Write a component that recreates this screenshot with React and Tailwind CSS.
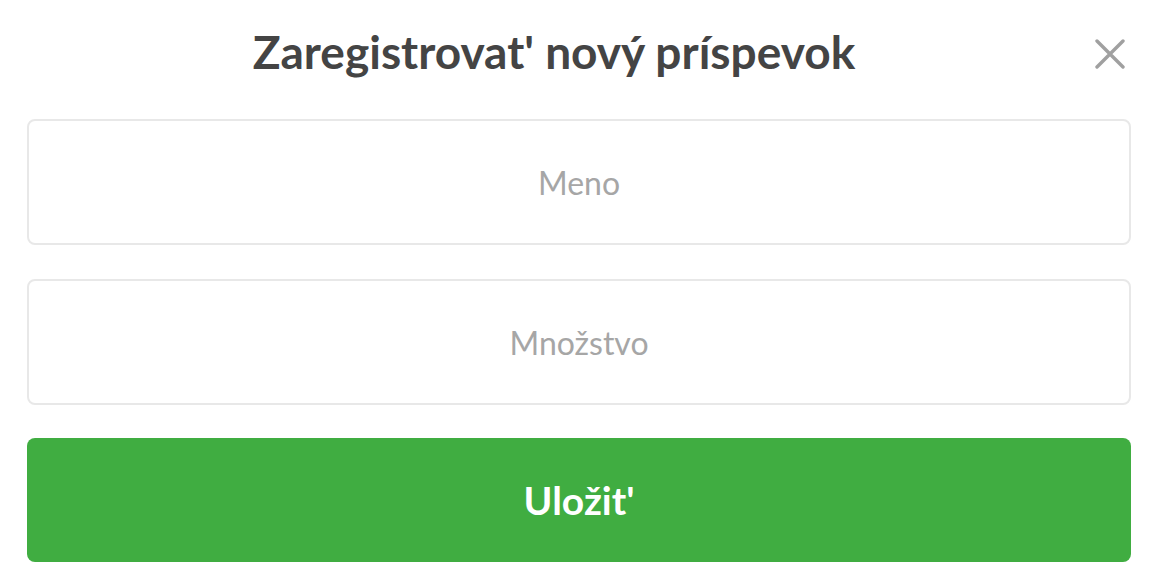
import React, { useState } from "react";

export default function App() {
  const [name, setName] = useState("");
  const [amount, setAmount] = useState("");

  return (
    <div
      className="w-[1160px] h-[580px] bg-white pl-[27px] pr-[29px] pt-[22px] flex flex-col"
      style={{ fontFamily: "Lato, 'Noto Sans', sans-serif" }}
    >
      <div className="flex items-center h-[60px]">
        <h1 className="flex-1 text-center text-[46px] font-bold text-[#444444] leading-none">
          Zaregistrovat' nový príspevok
        </h1>
        <button className="w-[50px] h-[50px] flex items-center justify-end pr-[6px] pt-[4px]" aria-label="close">
          <svg width="30" height="30" viewBox="0 0 30 30" fill="none">
            <path d="M2 2 L28 28 M28 2 L2 28" stroke="#a0a0a0" strokeWidth="3.4" strokeLinecap="round" />
          </svg>
        </button>
      </div>
      <div className="flex flex-col gap-[34px] mt-[37px]">
        <input
          className="w-full h-[126px] border-2 border-[#e8e8e8] rounded-[8px] text-center text-[32px] text-[#555] placeholder:text-[#a6a6a6] outline-none"
          placeholder="Meno"
          value={name}
          onChange={(e) => setName(e.target.value)}
        />
        <input
          className="w-full h-[126px] border-2 border-[#e8e8e8] rounded-[8px] text-center text-[32px] text-[#555] placeholder:text-[#a6a6a6] outline-none"
          placeholder="Množstvo"
          value={amount}
          onChange={(e) => setAmount(e.target.value)}
        />
        <button className="w-full h-[124px] -mt-[1px] bg-[#40ad41] rounded-[8px] text-white text-[39px] font-bold">
          Uložit'
        </button>
      </div>
    </div>
  );
}
